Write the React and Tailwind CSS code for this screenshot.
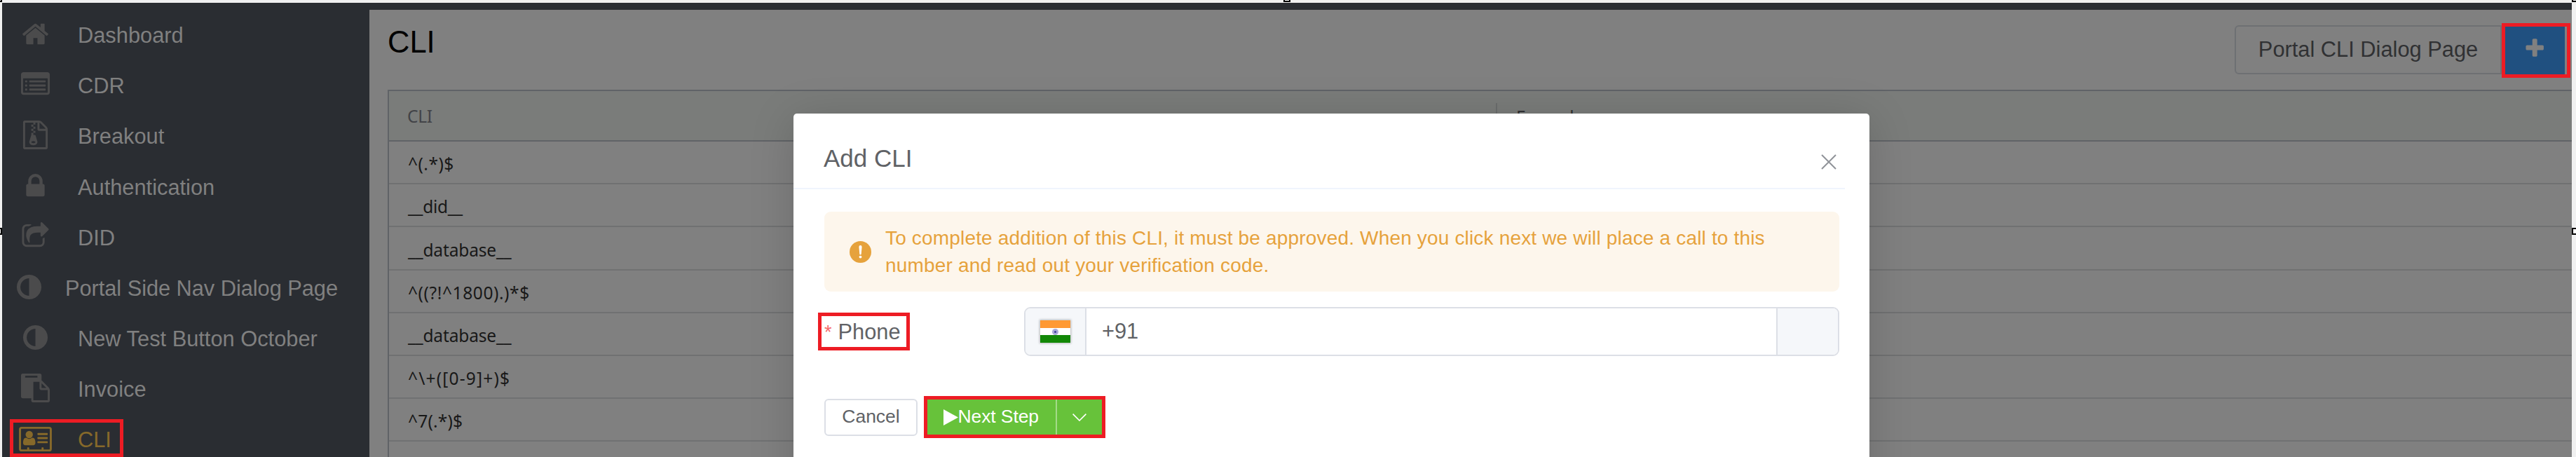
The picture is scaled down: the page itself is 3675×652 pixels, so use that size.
import React from "react";

const NAV = [
  { label: "Dashboard", icon: "home" },
  { label: "CDR", icon: "list" },
  { label: "Breakout", icon: "archive" },
  { label: "Authentication", icon: "lock" },
  { label: "DID", icon: "share" },
  { label: "Portal Side Nav Dialog Page", icon: "adjust", outdent: true },
  { label: "New Test Button October", icon: "adjust" },
  { label: "Invoice", icon: "paste" },
  { label: "CLI", icon: "card", active: true },
];

const ROWS = [
  { text: "^(.*)$", cls: "tracking-[0.5px]" },
  { text: "__did__", cls: "tracking-[-0.3px]" },
  { text: "__database__", cls: "tracking-[-0.15px]" },
  { text: "^((?!^1800).)*$", cls: "tracking-[0.6px]" },
  { text: "__database__", cls: "tracking-[-0.15px]" },
  { text: "^\\+([0-9]+)$", cls: "tracking-[1.2px]" },
  { text: "^7(.*)$", cls: "tracking-[0.2px]" },
  { text: "", cls: "" },
];

const PATHS = {
  home: "M1472 992v480q0 26-19 45t-45 19h-384v-384h-256v384h-384q-26 0-45-19t-19-45v-480q0-1 .5-3t.5-3l575-474 575 474q1 2 1 6zm223-69l-62 74q-8 9-21 11h-3q-13 0-21-7l-692-577-692 577q-12 8-24 7-13-2-21-11l-62-74q-8-10-7-23.5t11-21.5l719-599q32-26 76-26t76 26l244 204v-195q0-14 9-23t23-9h192q14 0 23 9t9 23v408l219 182q10 8 11 21.5t-7 23.5z",
  archive:
    "M768 384v-128h-128v128h128zm128 128v-128h-128v128h128zm-128 128v-128h-128v128h128zm128 128v-128h-128v128h128zm700-388q28 28 48 76t20 88v1152q0 40-28 68t-68 28h-1344q-40 0-68-28t-28-68v-1600q0-40 28-68t68-28h896q40 0 88 20t76 48zm-444-244v376h376q-10-29-22-41l-313-313q-12-12-41-22zm384 1528v-1024h-416q-40 0-68-28t-28-68v-416h-128v128h-128v-128h-512v1536h1280zm-627-721l107 349q8 27 8 52 0 83-72.5 137.5t-183.5 54.5-183.5-54.5-72.5-137.5q0-25 8-52 21-63 120-396v-128h128v128h79q22 0 39 13t23 34zm-141 465q53 0 90.5-19t37.5-45-37.5-45-90.5-19-90.5 19-37.5 45 37.5 45 90.5 19z",
  lock: "M640 768h512v-192q0-106-75-181t-181-75-181 75-75 181v192zm832 96v576q0 40-28 68t-68 28h-960q-40 0-68-28t-28-68v-576q0-40 28-68t68-28h32v-192q0-184 132-316t316-132 316 132 132 316v192h32q40 0 68 28t28 68z",
  share:
    "M1472 989v259q0 119-84.5 203.5t-203.5 84.5h-832q-119 0-203.5-84.5t-84.5-203.5v-832q0-119 84.5-203.5t203.5-84.5h255q13 0 22.5 9.5t9.5 22.5q0 27-26 32-77 26-133 60-10 4-16 4h-112q-66 0-113 47t-47 113v832q0 66 47 113t113 47h832q66 0 113-47t47-113v-214q0-19 18-29 28-13 54-37 16-16 35-8 21 9 21 29zm237-496l-384 384q-18 19-45 19-12 0-25-5-39-17-39-59v-192h-160q-323 0-438 131-119 137-74 473 3 23-20 34-8 2-12 2-16 0-26-13-10-14-21-31t-39.5-68.5-49.5-99.5-38.5-114-17.5-122q0-49 3.5-91t14-90 28-88 47-81.5 68.5-74 94.5-61.5 124.5-48.5 159.5-30.5 196.5-11h160v-192q0-42 39-59 13-5 25-5 26 0 45 19l384 384q19 19 19 45t-19 45z",
  adjust:
    "M896 1440v-1088q-148 0-273 73t-198 198-73 273 73 273 198 198 273 73zm768-544q0 209-103 385.5t-279.5 279.5-385.5 103-385.5-103-279.5-279.5-103-385.5 103-385.5 279.5-279.5 385.5-103 385.5 103 279.5 279.5 103 385.5z",
  paste:
    "M768 1664h896v-640h-416q-40 0-68-28t-28-68v-416h-384v1152zm256-1440v-64q0-13-9.5-22.5t-22.5-9.5h-704q-13 0-22.5 9.5t-9.5 22.5v64q0 13 9.5 22.5t22.5 9.5h704q13 0 22.5-9.5t9.5-22.5zm256 672h299l-299-299v299zm512 128v672q0 40-28 68t-68 28h-960q-40 0-68-28t-28-68v-160h-544q-40 0-68-28t-28-68v-1344q0-40 28-68t68-28h1088q40 0 68 28t28 68v328q21 13 36 28l408 408q28 28 48 76t20 88z",
  plus: "M1600 736v192q0 40-28 68t-68 28h-416v416q0 40-28 68t-68 28h-192q-40 0-68-28t-28-68v-416h-416q-40 0-68-28t-28-68v-192q0-40 28-68t68-28h416v-416q0-40 28-68t68-28h192q40 0 68 28t28 68v416h416q40 0 68 28t28 68z",
};

function Icon({ name, className }) {
  if (name === "list") {
    return (
      <svg viewBox="0 0 1792 1792" className={className} fill="currentColor">
        <path
          fillRule="evenodd"
          d="M160 128h1472a160 160 0 0 1 160 160v1088a160 160 0 0 1-160 160H160a160 160 0 0 1-160-160V288a160 160 0 0 1 160-160zM128 544v832q0 32 32 32h1472q32 0 32-32V544q0-32-32-32H160q-32 0-32 32z"
        />
        {[640, 896, 1152].map((y) => (
          <g key={y}>
            <rect x="256" y={y} width="128" height="128" rx="32" />
            <rect x="512" y={y} width="1024" height="128" rx="32" />
          </g>
        ))}
      </svg>
    );
  }
  if (name === "card") {
    return (
      <svg viewBox="0 0 2048 1792" className={className} fill="currentColor">
        <path d="M1024 1131q0-64-9-117.5t-29.5-103-60.5-78-97-28.5q-6 4-30 18t-37.5 21.5-35.5 17.5-43 14.5-42 4.5-42-4.5-43-14.5-35.5-17.5-37.5-21.5-30-18q-57 0-97 28.5t-60.5 78-29.5 103-9 117.5 37 106.5 91 42.5h512q54 0 91-42.5t37-106.5z" />
        <circle cx="640" cy="611" r="227" />
        <rect x="1152" y="512" width="640" height="128" rx="32" />
        <rect x="1152" y="768" width="640" height="128" rx="32" />
        <rect x="1152" y="1024" width="640" height="128" rx="32" />
        <rect x="64" y="192" width="1920" height="1408" rx="96" fill="none" stroke="currentColor" strokeWidth="128" />
        <rect x="512" y="1408" width="128" height="160" rx="32" />
        <rect x="1408" y="1408" width="128" height="160" rx="32" />
      </svg>
    );
  }
  return (
    <svg viewBox="0 0 1792 1792" className={className} fill="currentColor">
      <path d={PATHS[name]} />
    </svg>
  );
}

function Sidebar() {
  return (
    <nav className="w-[527px] shrink-0 bg-[#2a2d32] pl-[4px]">
      {NAV.map((item) => (
        <div
          key={item.label}
          className={
            "relative flex h-[72.1px] items-center " +
            (item.outdent ? "pl-[10px] " : "pl-[19px] ") +
            (item.active ? "text-[#86692a]" : "text-[#808080]")
          }
        >
          <span className={"flex w-[55px] shrink-0 justify-center " + (item.active ? "text-[#86692a]" : "text-[#4b4b4c]")}>
            <Icon name={item.icon} className={item.active ? "h-[41px] w-[47px]" : "mb-[2px] size-[41px]"} />
          </span>
          <span
            className={
              "pt-[3px] text-[30.8px] leading-[36px] whitespace-nowrap " + (item.outdent ? "ml-[24px] tracking-[-0.05px]" : "ml-[33px]")
            }
          >
            {item.label}
          </span>
          {item.active && <div className="absolute top-[7.5px] left-[10px] h-[54px] w-[162px] border-5 border-[#ed1c24]" />}
        </div>
      ))}
    </nav>
  );
}

function Page() {
  return (
    <main className="min-w-0 flex-1 bg-[#808080] pl-[26px]">
      <header className="flex h-[114px] justify-between">
        <h1 className="mt-[21px] text-[43.5px] leading-[50px] text-black">CLI</h1>
        <div className="mt-[22px] flex">
          <button className="h-[70px] w-[381px] rounded-l-md border-2 border-[#6e7073] pl-[1px] text-center text-[30.8px] whitespace-nowrap text-[#303133]">
            Portal CLI Dialog Page
          </button>
          <div className="mt-[-3px] mr-[2px] flex h-[78px] w-[98.5px] border-5 border-[#ed1c24] pr-[3px]">
            <button className="flex flex-1 items-center justify-center bg-[#205080] pb-[4px] text-[#808080]">
              <Icon name="plus" className="size-[32.4px]" />
            </button>
          </div>
        </div>
      </header>
      <div className="border-t-2 border-l-2 border-[#606367] font-['Noto_Sans','Open_Sans',sans-serif] text-[24.5px] leading-[34px]">
        <div className="flex h-[72.5px] items-center border-b-2 border-[#606367] bg-[#7a7c7a] text-[#424347]">
          <div className="w-[1579px] pt-[3px] pl-[26px] tracking-[-0.3px]">CLI</div>
          <div className="h-[36px] w-[2px] bg-[#6b6d6d]" />
          <div className="pt-[4px] pl-[27px] tracking-[-0.4px] text-[#303133]">Example</div>
        </div>
        {ROWS.map((r, i) => (
          <div key={i} className="flex h-[61.15px] items-center border-b-2 border-[#707172] pt-[5px] pl-[27px] text-[#181818]">
            <span className={r.cls}>{r.text}</span>
          </div>
        ))}
      </div>
    </main>
  );
}

function Flag() {
  return (
    <div className="flex h-[32px] w-[43px] flex-col shadow-[0_0_3px_1px_rgba(0,0,0,0.25)]">
      <div className="flex-1 bg-[#ff9933]" />
      <div className="flex flex-1 items-center justify-center bg-white">
        <div className="flex size-[9px] items-center justify-center rounded-full bg-[#a9a9d8]">
          <div className="size-[3px] rounded-full bg-[#3c3c9c]" />
        </div>
      </div>
      <div className="flex-1 bg-[#128807]" />
    </div>
  );
}

function Dialog() {
  return (
    <section className="absolute top-[162px] left-[1132px] h-[560px] w-[1535px] rounded-[5px] bg-white text-[#606266] shadow-[0_8px_64px_rgba(0,0,0,0.16)]">
      <div className="mr-[35px] flex h-[108px] items-start justify-between border-b-2 border-[#f0f5fd] pl-[43px]">
        <h2 className="mt-[43px] text-[35px] leading-[42px]">Add CLI</h2>
        <svg viewBox="0 0 22 22" className="mt-[58px] mr-[12.5px] size-[22px]" fill="none" stroke="#909399" strokeWidth="2">
          <path d="M1 1 21 21M21 1 1 21" />
        </svg>
      </div>
      <div className="mr-[43px] ml-[43.5px]">
        <div className="mt-[32px] flex h-[114px] items-center rounded-[9px] bg-[#fdf6ec] pl-[36.5px] text-[#e6a23c]">
          <svg viewBox="0 0 31 31" className="size-[31px] shrink-0">
            <circle cx="15.5" cy="15.5" r="15.5" fill="#e6a23c" />
            <path d="M13.4 8.2a2.1 2.1 0 0 1 4.2 0l-.9 10a1.2 1.2 0 0 1-2.4 0z" fill="#fff" />
            <circle cx="15.5" cy="22.6" r="1.9" fill="#fff" />
          </svg>
          <p className="ml-[20px] text-[28px] leading-[39px] tracking-[0.17px] whitespace-nowrap">
            To complete addition of this CLI, it must be approved. When you click next we will place a call to this
            <br />
            number and read out your verification code.
          </p>
        </div>
        <div className="mt-[22px] flex h-[70px] items-center">
          <div className="-ml-[8.5px] flex h-[54px] w-[131px] items-center border-5 border-[#ed1c24] pt-[2px] pl-[4px] text-[30.8px] leading-[36px] whitespace-nowrap">
            <span className="mr-[9px] text-[27px] leading-[36px] text-[#f56c6c]">*</span>
            Phone
          </div>
          <div className="ml-[163px] flex h-[70px] flex-1 overflow-hidden rounded-[9px] border-2 border-[#dcdfe6]">
            <div className="flex w-[87px] items-center justify-center border-r-2 border-[#dcdfe6] bg-[#f5f7fa]">
              <Flag />
            </div>
            <div className="flex flex-1 items-center pl-[22px] text-[30.8px]">+91</div>
            <div className="w-[88px] border-l-2 border-[#dcdfe6] bg-[#f5f7fa]" />
          </div>
        </div>
        <div className="mt-[57px] flex h-[60px] items-center text-[26.5px]">
          <button className="h-[53px] w-[133px] rounded-[6px] border-2 border-[#dcdfe6] pl-[1px]">Cancel</button>
          <div className="ml-[9px] flex h-[60px] w-[259px] border-5 border-[#ed1c24] bg-[#67c23a] text-white">
            <button className="flex w-[185px] items-center border-r-2 border-[#a4da89] pl-[23px] tracking-[-0.1px] whitespace-nowrap">
              <svg viewBox="0 0 21 23" className="h-[23px] w-[21px]" fill="#fff">
                <path d="M0 0 21 11.5 0 23z" />
              </svg>
              Next Step
            </button>
            <button className="flex flex-1 items-center justify-center">
              <svg viewBox="0 0 20 11" className="h-[11px] w-[20px]" fill="none" stroke="#fff" strokeWidth="1.6">
                <path d="m.6.6 9.4 9.4L19.4.6" />
              </svg>
            </button>
          </div>
        </div>
      </div>
    </section>
  );
}

function Handle({ className }) {
  return <div className={"absolute border-2 border-black bg-white " + className} />;
}

export default function App() {
  return (
    <div className="relative h-[652px] w-[3675px] overflow-hidden bg-[#f0f0f0] pt-[4px] font-['Liberation_Sans',Arial,sans-serif]">
      <div className="ml-[3px] h-[648px] w-[3666px] overflow-hidden bg-[#808080]">
        <div className="h-[9.7px] bg-[#2a2d32]" />
        <div className="-ml-[3px] flex h-[650px]">
          <Sidebar />
          <Page />
        </div>
      </div>
      <Dialog />
      <div className="absolute top-0 left-0 h-[652px] w-[3px] bg-[#f0f0f0]" />
      <Handle className="-top-[7px] -left-[7px] size-[10px]" />
      <Handle className="-top-[7px] left-[1831px] size-[10px]" />
      <Handle className="-top-[7px] left-[3669px] size-[10px]" />
      <Handle className="top-[325px] -left-[7px] size-[10px]" />
      <Handle className="top-[325px] left-[3669px] size-[10px]" />
    </div>
  );
}
